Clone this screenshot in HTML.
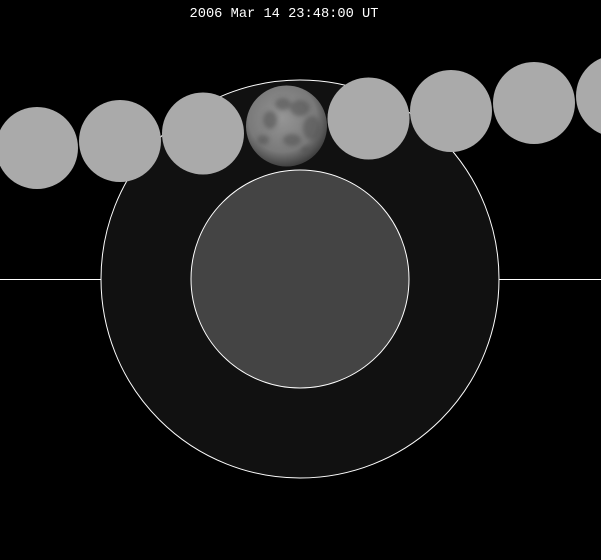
<!DOCTYPE html>
<html><head><style>
html,body{margin:0;padding:0;background:#000;width:601px;height:560px;overflow:hidden}
svg{display:block}
</style></head><body>
<svg width="601" height="560" viewBox="0 0 601 560" xmlns="http://www.w3.org/2000/svg">
<defs>
<radialGradient id="mg" cx="45%" cy="40%" r="60%">
<stop offset="0" stop-color="#959595"/>
<stop offset="0.7" stop-color="#7a7a7a"/>
<stop offset="1" stop-color="#404040"/>
</radialGradient>
<clipPath id="mc"><circle cx="286.5" cy="126" r="40.5"/></clipPath>
<filter id="bl"><feGaussianBlur stdDeviation="2"/></filter>
</defs>
<rect width="601" height="560" fill="#000"/>
<line x1="0" y1="279.5" x2="601" y2="279.5" stroke="#fff" stroke-width="1"/>
<circle cx="300" cy="279" r="199" fill="#111" stroke="#fff" stroke-width="1"/>
<circle cx="300" cy="279" r="109" fill="#444" stroke="#fff" stroke-width="1"/>
<g fill="#aaa">
<circle cx="37" cy="148" r="41"/>
<circle cx="120" cy="141" r="41"/>
<circle cx="203" cy="133.5" r="41"/>
<circle cx="368.5" cy="118.5" r="41"/>
<circle cx="451" cy="111" r="41"/>
<circle cx="534" cy="103" r="41"/>
<circle cx="617" cy="96" r="41"/>
</g>
<circle cx="286.5" cy="126" r="40.5" fill="url(#mg)"/>
<g clip-path="url(#mc)">
<g fill="#555" opacity="0.6" filter="url(#bl)">
<ellipse cx="300" cy="108" rx="10" ry="8"/>
<ellipse cx="312" cy="128" rx="9" ry="12"/>
<ellipse cx="283" cy="104" rx="8" ry="6"/>
<ellipse cx="270" cy="120" rx="7" ry="9"/>
<ellipse cx="292" cy="140" rx="9" ry="6"/>
<ellipse cx="263" cy="140" rx="6" ry="5"/>
<ellipse cx="306" cy="150" rx="5" ry="4"/>
</g>
</g>
<text x="284" y="17" fill="#fff" font-family="'Liberation Mono',monospace" font-size="13.7" text-anchor="middle">2006 Mar 14 23:48:00 UT</text>
</svg>
</body></html>
